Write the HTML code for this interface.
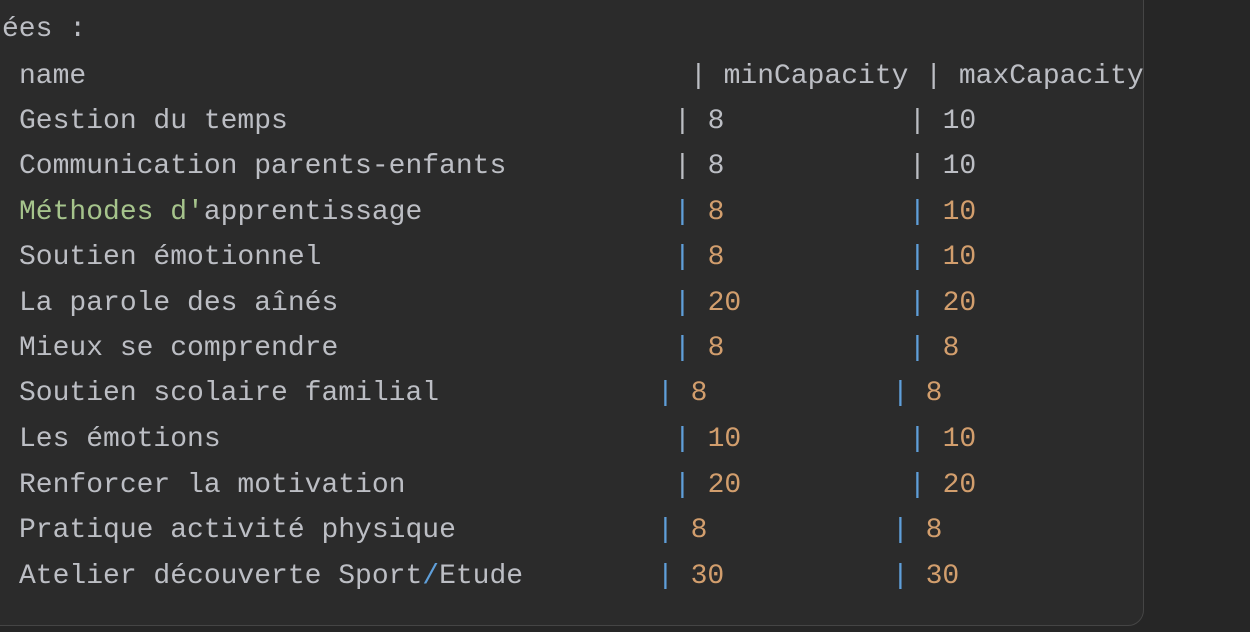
<!DOCTYPE html>
<html><head><meta charset="utf-8"><style>
html,body{margin:0;padding:0;background:#262626;width:1250px;height:632px;overflow:hidden}
.panel{position:absolute;left:-20px;top:-20px;width:1162px;height:644px;background:#2b2b2b;border:1px solid #454545;border-radius:16px}
.t{position:absolute;font-family:"Liberation Mono",monospace;font-size:28px;line-height:40px;color:#bcbec4;white-space:pre;margin-top:2px}
.g{color:#a6c48c}.n{color:#d29e6d}.p{color:#5f9fda}
</style></head><body>
<div class="panel"></div>
<div class="t" style="left:2px;top:8px">ées :</div>
<div class="t" style="left:19px;top:55px">name</div>
<div class="t" style="left:690px;top:55px">| minCapacity | maxCapacity</div>

<div class="t" style="left:19px;top:100px">Gestion du temps</div>
<div class="t" style="left:674px;top:100px">| 8</div><div class="t" style="left:909px;top:100px">| 10</div>
<div class="t" style="left:19px;top:145px">Communication parents-enfants</div>
<div class="t" style="left:674px;top:145px">| 8</div><div class="t" style="left:909px;top:145px">| 10</div>
<div class="t" style="left:19px;top:191px"><span class="g">Méthodes d'</span>apprentissage</div>
<div class="t" style="left:674px;top:191px"><span class="p">|</span> <span class="n">8</span></div><div class="t" style="left:909px;top:191px"><span class="p">|</span> <span class="n">10</span></div>
<div class="t" style="left:19px;top:236px">Soutien émotionnel</div>
<div class="t" style="left:674px;top:236px"><span class="p">|</span> <span class="n">8</span></div><div class="t" style="left:909px;top:236px"><span class="p">|</span> <span class="n">10</span></div>
<div class="t" style="left:19px;top:282px">La parole des aînés</div>
<div class="t" style="left:674px;top:282px"><span class="p">|</span> <span class="n">20</span></div><div class="t" style="left:909px;top:282px"><span class="p">|</span> <span class="n">20</span></div>
<div class="t" style="left:19px;top:327px">Mieux se comprendre</div>
<div class="t" style="left:674px;top:327px"><span class="p">|</span> <span class="n">8</span></div><div class="t" style="left:909px;top:327px"><span class="p">|</span> <span class="n">8</span></div>
<div class="t" style="left:19px;top:372px">Soutien scolaire familial</div>
<div class="t" style="left:657px;top:372px"><span class="p">|</span> <span class="n">8</span></div><div class="t" style="left:892px;top:372px"><span class="p">|</span> <span class="n">8</span></div>
<div class="t" style="left:19px;top:418px">Les émotions</div>
<div class="t" style="left:674px;top:418px"><span class="p">|</span> <span class="n">10</span></div><div class="t" style="left:909px;top:418px"><span class="p">|</span> <span class="n">10</span></div>
<div class="t" style="left:19px;top:464px">Renforcer la motivation</div>
<div class="t" style="left:674px;top:464px"><span class="p">|</span> <span class="n">20</span></div><div class="t" style="left:909px;top:464px"><span class="p">|</span> <span class="n">20</span></div>
<div class="t" style="left:19px;top:509px">Pratique activité physique</div>
<div class="t" style="left:657px;top:509px"><span class="p">|</span> <span class="n">8</span></div><div class="t" style="left:892px;top:509px"><span class="p">|</span> <span class="n">8</span></div>
<div class="t" style="left:19px;top:555px">Atelier découverte Sport<span class="p">/</span>Etude</div>
<div class="t" style="left:657px;top:555px"><span class="p">|</span> <span class="n">30</span></div><div class="t" style="left:892px;top:555px"><span class="p">|</span> <span class="n">30</span></div>
</body></html>
